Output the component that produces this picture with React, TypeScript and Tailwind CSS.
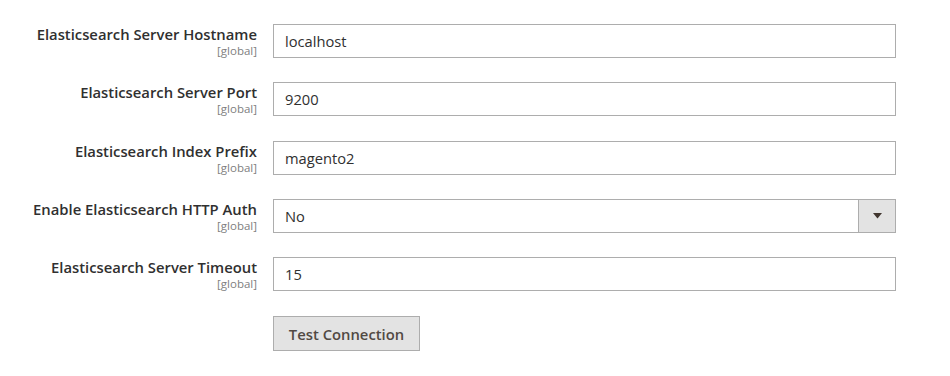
import React from "react";

const fields = [
  { label: "Elasticsearch Server Hostname", value: "localhost", type: "input" },
  { label: "Elasticsearch Server Port", value: "9200", type: "input" },
  { label: "Elasticsearch Index Prefix", value: "magento2", type: "input" },
  { label: "Enable Elasticsearch HTTP Auth", value: "No", type: "select" },
  { label: "Elasticsearch Server Timeout", value: "15", type: "input" },
];

export default function App() {
  return (
    <div
      className="w-[950px] h-[376px] bg-white pt-[24px] overflow-hidden"
      style={{ fontFamily: '"Open Sans", "Noto Sans", sans-serif' }}
    >
      <div className="flex flex-col gap-[24.3px]">
        {fields.map((f) => (
          <div key={f.label} className="flex items-start">
            <div className="w-[257px] shrink-0 text-right">
              <div className="text-[14.8px] leading-[20px] font-semibold text-[#303030]">{f.label}</div>
              <div className="text-[11.5px] leading-[14px] text-[#808080]">[global]</div>
            </div>
            <div className="ml-[16px] w-[623px] h-[34px] border border-[#adadad] bg-white flex items-center">
              <span className="pl-[11px] text-[14.7px] text-[#303030] flex-1">{f.value}</span>
              {f.type === "select" && (
                <div className="w-[37px] h-full bg-[#e3e3e3] border-l border-[#adadad] flex items-center justify-center">
                  <svg width="9" height="6" viewBox="0 0 9 6">
                    <path d="M0 0 H9 L4.5 5.5 Z" fill="#41362f" />
                  </svg>
                </div>
              )}
            </div>
          </div>
        ))}
      </div>
      <div className="ml-[273px] mt-[25px]">
        <button className="w-[147px] h-[35px] bg-[#e3e3e3] border border-[#adadad] text-[14.8px] font-semibold text-[#514943]">
          Test Connection
        </button>
      </div>
    </div>
  );
}
